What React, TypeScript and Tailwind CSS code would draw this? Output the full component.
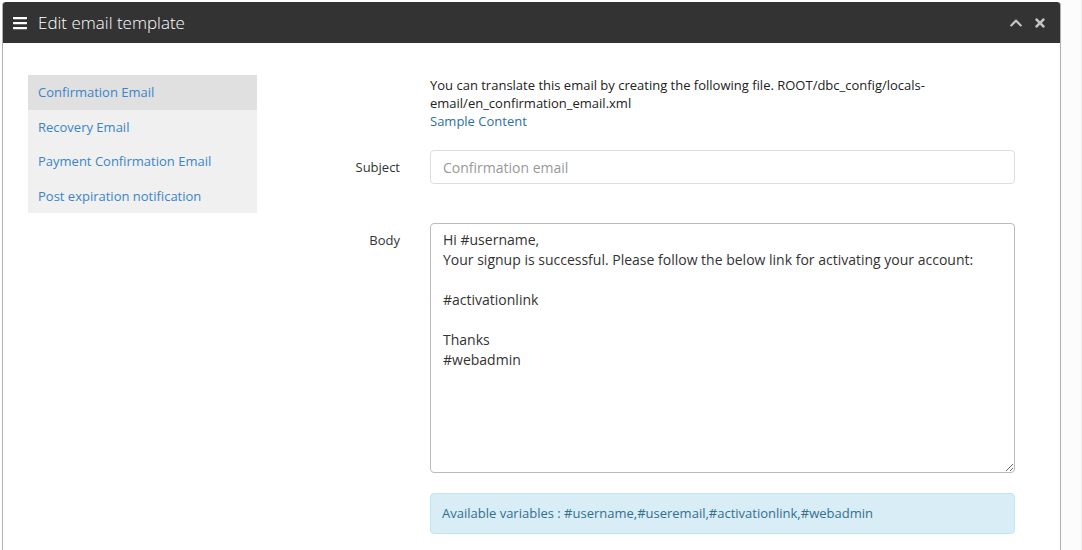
import { FaBars, FaChevronUp, FaTimes } from 'react-icons/fa';

const templates = [
  'Confirmation Email',
  'Recovery Email',
  'Payment Confirmation Email',
  'Post expiration notification',
];

const bodyText = `Hi #username,
Your signup is successful. Please follow the below link for activating your account:

#activationlink

Thanks
#webadmin`;

export default function App() {
  return (
    <div className="h-[550px] w-full bg-white font-['Open_Sans',sans-serif] text-[#333]">
      <div className="flex h-full">
        {/* panel */}
        <div className="ml-[2px] mt-[2px] flex h-[548px] w-[1059px] flex-col rounded-t-[3px] border-x border-[#b0b0b0]">
          <div className="flex h-[41px] shrink-0 items-center rounded-t-[3px] bg-[#333] pl-[9px] pr-[13px] text-white">
            <FaBars className="h-[16px] w-[16px]" />
            <span className="ml-[10px] text-[17px] font-light leading-none">Edit email template</span>
            <div className="ml-auto flex items-center gap-[10px] text-[#c4c4c4]">
              <FaChevronUp className="h-[14px] w-[14px]" />
              <FaTimes className="h-[14px] w-[14px]" />
            </div>
          </div>

          <div className="flex pt-[32px] pl-[25px]">
            {/* sidebar */}
            <ul className="w-[229px] self-start bg-[#f0f0f0] text-[13px]">
              {templates.map((t, i) => (
                <li
                  key={t}
                  className={
                    'h-[34.5px] pl-[10px] leading-[34.5px] text-[#3a85c8] ' +
                    (i === 0 ? 'bg-[#e0e0e0]' : '')
                  }
                >
                  {t}
                </li>
              ))}
            </ul>

            {/* form */}
            <div className="flex flex-col">
              <div className="ml-[173px] w-[520px] pt-[1px] text-[13px] leading-[18px] text-[#222]">
                You can translate this email by creating the following file. ROOT/dbc_config/locals-email/en_confirmation_email.xml
                <div className="text-[#2f6fa8]">Sample Content</div>
              </div>

              <div className="mt-[20px] flex items-center">
                <label className="w-[143px] pt-[1px] text-right text-[13px]">Subject</label>
                <input
                  className="ml-[30px] h-[34px] w-[585px] rounded-[4px] border border-[#ddd] px-[12px] text-[14px] outline-none placeholder:text-[#999]"
                  placeholder="Confirmation email"
                />
              </div>

              <div className="mt-[39px] flex items-start">
                <label className="w-[143px] pt-[8px] text-right text-[13px]">Body</label>
                <textarea
                  className="ml-[30px] h-[250px] w-[585px] resize-y rounded-[4px] border border-[#bbb] px-[12px] py-[6px] text-[14px] leading-[20px] text-[#333] outline-none"
                  defaultValue={bodyText}
                />
              </div>

              <div className="ml-[173px] mt-[20px] flex h-[41px] w-[585px] items-center rounded-[4px] border border-[#bce8f1] bg-[#d9edf7] px-[11px] text-[13px] text-[#31708f]">
                Available variables : #username,#useremail,#activationlink,#webadmin
              </div>
            </div>
          </div>
        </div>
        <div className="flex-1 border-r border-[#f0f0f0] bg-[#fcfcfc]" />
      </div>
    </div>
  );
}
